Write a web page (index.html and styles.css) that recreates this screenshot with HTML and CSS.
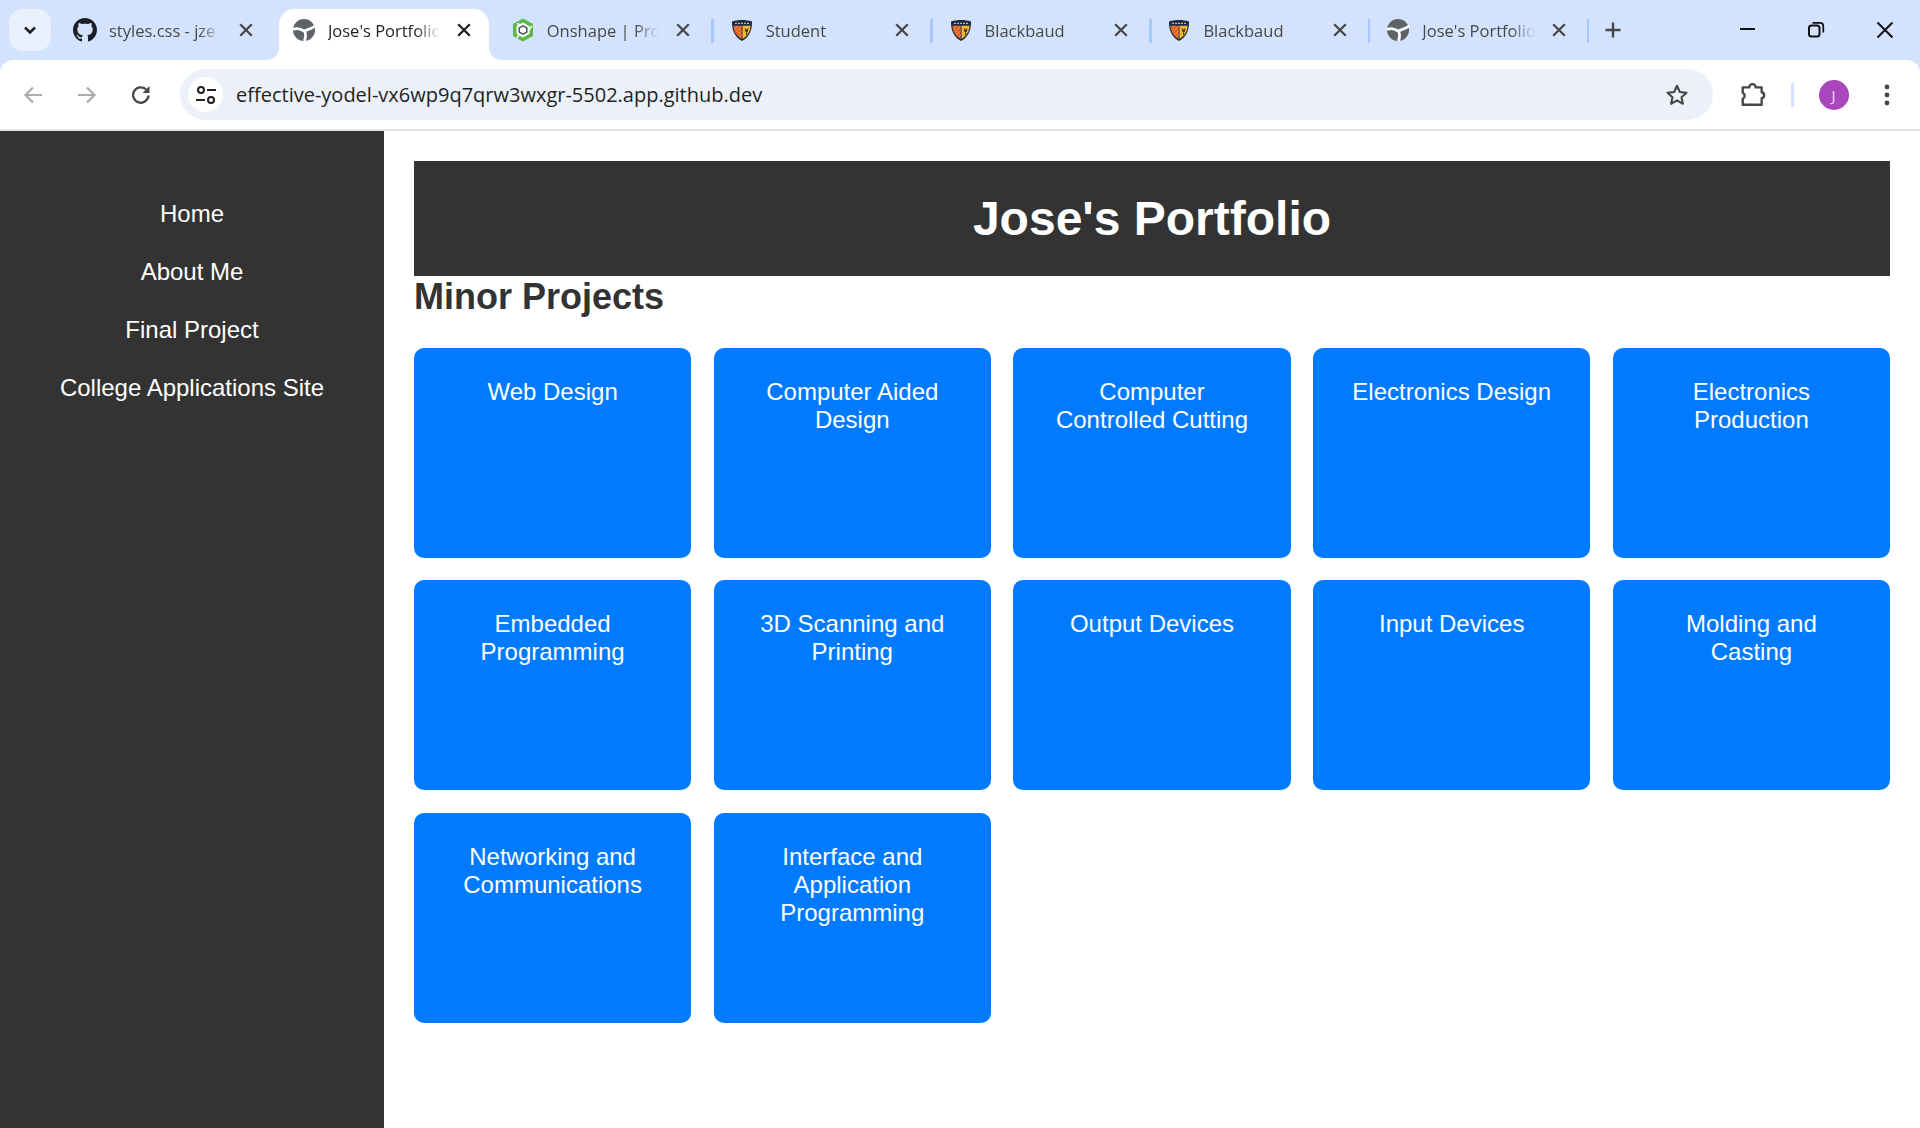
FILE: index.html
```html
<!DOCTYPE html>
<html lang="en">
<head>
    <meta charset="UTF-8">
    <meta name="viewport" content="width=device-width, initial-scale=1.0">
    <title>Jose's Portfolio</title>
    <link rel="stylesheet" href="styles.css">
</head>
<body>

<svg class="defs" width="0" height="0">
    <defs>
        <pattern id="stripes" width="3" height="3" patternUnits="userSpaceOnUse" patternTransform="rotate(45)">
            <rect width="3" height="3" fill="#f08a2c"/>
            <rect width="1.3" height="3" fill="#d9482b"/>
        </pattern>
        <symbol id="close" viewBox="0 0 24 24">
            <path d="M6.200 6.200l11.600 11.600M17.800 6.200L6.200 17.800" fill="none" stroke="currentColor" stroke-width="2.300"/>
        </symbol>
        <symbol id="globe" viewBox="0 0 24 24">
            <circle cx="12" cy="12" r="11" fill="#5f6368"/>
            <path d="M1 11.500C5 9.500 9 11 12 13c2 1.500 2 5 .5 10M23 8c-3 2.500-7 3.500-11 5" fill="none" stroke="#fff" stroke-width="2.800"/>
        </symbol>
        <symbol id="shield" viewBox="0 0 24 24">
            <path d="M2 3.500C8 1.500 16 1.500 22 3.500 22.300 12 19 19.500 12 23 5 19.500 1.700 12 2 3.500z" fill="#1d2b45"/>
            <path d="M3.500 7.800h8.200v13.200C6.500 18 3.700 13.500 3.500 7.800z" fill="url(#stripes)"/>
            <path d="M12.500 7.800h8c-.2 5.700-3 10.200-8 13.200z" fill="#f1b62c"/>
            <path d="M14.800 10l1.700 1.500L18.300 10l-.4 3.500-1 1 .5 2.500h-1.600l.5-2.500-1-1z" fill="#4a3a1e"/>
            <path d="M5 5.300h14" stroke="#cdb888" stroke-width="1.200" stroke-dasharray="2 1"/>
        </symbol>
    </defs>
</svg>

<div class="chrome">
    <div class="tabstrip">
        <button class="tab-search">
            <svg width="24" height="24" viewBox="0 0 24 24"><path d="M7 9.500l5 5 5-5" fill="none" stroke="#1f1f1f" stroke-width="2.500"/></svg>
        </button>

        <div class="tab">
            <svg class="favicon" viewBox="0 0 16 16"><path fill="#1b1f23" d="M8 0C3.580 0 0 3.580 0 8c0 3.540 2.290 6.530 5.470 7.590.4.070.55-.17.55-.38 0-.19-.01-.82-.01-1.490-2.010.37-2.530-.49-2.690-.94-.09-.23-.48-.94-.82-1.130-.28-.15-.68-.52-.01-.53.63-.01 1.080.58 1.230.82.72 1.210 1.870.87 2.330.66.070-.52.28-.87.51-1.070-1.780-.2-3.640-.89-3.640-3.950 0-.87.31-1.590.82-2.150-.08-.2-.36-1.020.08-2.120 0 0 .67-.21 2.200.82.64-.18 1.320-.27 2-.27.68 0 1.360.09 2 .27 1.530-1.040 2.200-.82 2.200-.82.44 1.100.16 1.920.08 2.120.51.56.82 1.270.82 2.150 0 3.070-1.870 3.750-3.650 3.950.29.25.54.73.54 1.480 0 1.070-.01 1.930-.01 2.200 0 .21.15.46.55.38A8.013 8.013 0 0016 8c0-4.420-3.580-8-8-8z"/></svg>
            <span class="tab-title">styles.css - jze</span>
            <svg class="tab-close"><use href="#close"/></svg>
        </div>

        <div class="tab active">
            <svg class="favicon"><use href="#globe"/></svg>
            <span class="tab-title">Jose's Portfolio</span>
            <svg class="tab-close"><use href="#close"/></svg>
        </div>

        <div class="tab sep">
            <svg class="favicon" viewBox="0 0 24 24">
                <path d="M12 0.500L22 6v12l-10 5.500L2 18V6z" fill="#5cb947"/>
                <path d="M12 4.500l6.500 3.700v7.600L12 19.500l-6.500-3.700V8.200z" fill="#fff"/>
                <path d="M6 5.500l6.500 3M21 8l-4 5M6 20l3-5" stroke="#fff" stroke-width="1.500" fill="none"/>
                <path d="M12 7.800l3.800 2.100v4.200L12 16.200l-3.800-2.100V9.900z" fill="none" stroke="#4d5458" stroke-width="1.500"/>
            </svg>
            <span class="tab-title">Onshape | Pro</span>
            <svg class="tab-close"><use href="#close"/></svg>
        </div>

        <div class="tab sep">
            <svg class="favicon"><use href="#shield"/></svg>
            <span class="tab-title">Student</span>
            <svg class="tab-close"><use href="#close"/></svg>
        </div>

        <div class="tab sep">
            <svg class="favicon"><use href="#shield"/></svg>
            <span class="tab-title">Blackbaud</span>
            <svg class="tab-close"><use href="#close"/></svg>
        </div>

        <div class="tab sep">
            <svg class="favicon"><use href="#shield"/></svg>
            <span class="tab-title">Blackbaud</span>
            <svg class="tab-close"><use href="#close"/></svg>
        </div>

        <div class="tab sep">
            <svg class="favicon"><use href="#globe"/></svg>
            <span class="tab-title">Jose's Portfolio</span>
            <svg class="tab-close"><use href="#close"/></svg>
        </div>

        <svg class="new-tab" width="24" height="24" viewBox="0 0 24 24"><path d="M12 4.500v15M4.500 12h15" stroke="#474747" stroke-width="2.400"/></svg>

        <div class="window-controls">
            <svg width="24" height="24" viewBox="0 0 24 24"><path d="M5 11h15" stroke="#111" stroke-width="2"/></svg>
            <svg width="24" height="24" viewBox="0 0 24 24"><rect x="5" y="7.500" width="10.500" height="11" rx="2.500" fill="none" stroke="#111" stroke-width="2"/><path d="M8.500 4.800h7.500q3.300 0 3.300 3.300v6.500" fill="none" stroke="#111" stroke-width="1.700"/></svg>
            <svg width="24" height="24" viewBox="0 0 24 24"><path d="M4.500 4.500l15 15M19.500 4.500l-15 15" stroke="#111" stroke-width="2"/></svg>
        </div>
    </div>

    <div class="toolbar">
        <svg class="nav-icon dim" viewBox="0 0 24 24"><path d="M21 12H5M12 4.500L4.500 12l7.500 7.500" fill="none" stroke="#a9abae" stroke-width="2.200"/></svg>
        <svg class="nav-icon dim" viewBox="0 0 24 24"><path d="M3 12h16M12 4.500l7.500 7.500-7.500 7.500" fill="none" stroke="#a9abae" stroke-width="2.200"/></svg>
        <svg class="nav-icon" viewBox="0 0 24 24"><path d="M19.500 12.500A7.700 7.700 0 1 1 17 6.300" fill="none" stroke="#474747" stroke-width="2.300"/><path d="M20.500 3v7h-7z" fill="#474747"/></svg>

        <div class="omnibox">
            <span class="site-info">
                <svg width="24" height="24" viewBox="0 0 24 24">
                    <circle cx="7" cy="7" r="3" fill="none" stroke="#1f1f1f" stroke-width="2"/>
                    <path d="M13 7h9M2 17h9" stroke="#1f1f1f" stroke-width="2"/>
                    <circle cx="17" cy="17" r="3" fill="none" stroke="#1f1f1f" stroke-width="2"/>
                </svg>
            </span>
            <span class="url">effective-yodel-vx6wp9q7qrw3wxgr-5502.app.github.dev</span>
            <svg class="star" width="24" height="24" viewBox="0 0 24 24"><path d="M12 2.800l2.800 6.200 6.700.7-5 4.500 1.400 6.600-5.900-3.400-5.900 3.400 1.400-6.600-5-4.500 6.700-.7z" fill="none" stroke="#474747" stroke-width="2.100" stroke-linejoin="round"/></svg>
        </div>

        <svg class="ext" width="26" height="26" viewBox="0 0 24 24"><path d="M2.500 5h6a3 3 0 0 1 6 0h5.500v4.500a2.800 2.800 0 0 1 0 5.500v6H2.500v-5.500a3 3 0 0 0 0-5.500z" fill="none" stroke="#474747" stroke-width="2.200" stroke-linejoin="round"/></svg>
        <span class="toolbar-divider"></span>
        <span class="avatar">J</span>
        <svg class="menu-dots" width="24" height="24" viewBox="0 0 24 24"><circle cx="12" cy="4" r="2.400" fill="#474747"/><circle cx="12" cy="12" r="2.400" fill="#474747"/><circle cx="12" cy="20" r="2.400" fill="#474747"/></svg>
    </div>
</div>

<div class="page">
    <nav class="sidebar">
        <a href="#">Home</a>
        <a href="#">About Me</a>
        <a href="#">Final Project</a>
        <a href="#">College Applications Site</a>
    </nav>

    <main class="content">
        <header class="banner">
            <h1>Jose's Portfolio</h1>
        </header>

        <h2>Minor Projects</h2>

        <div class="grid">
            <a class="card" href="#">Web Design</a>
            <a class="card" href="#">Computer Aided Design</a>
            <a class="card" href="#">Computer Controlled Cutting</a>
            <a class="card" href="#">Electronics Design</a>
            <a class="card" href="#">Electronics Production</a>
            <a class="card" href="#">Embedded Programming</a>
            <a class="card" href="#">3D Scanning and Printing</a>
            <a class="card" href="#">Output Devices</a>
            <a class="card" href="#">Input Devices</a>
            <a class="card" href="#">Molding and Casting</a>
            <a class="card" href="#">Networking and Communications</a>
            <a class="card" href="#">Interface and Application Programming</a>
        </div>
    </main>
</div>

</body>
</html>
```

FILE: styles.css
```css
html, body {
    margin: 0;
    height: 100%;
}
body {
    display: flex;
    flex-direction: column;
    overflow: hidden;
    background-color: #ffffff;
    font-family: "Liberation Sans", Arial, sans-serif;
}
.defs {
    display: block;
    height: 0;
}

/* browser window */
.chrome {
    flex: none;
    background-color: #d3e3fd;
}
.tabstrip {
    display: flex;
    align-items: flex-end;
    height: 60px;
    padding-left: 9px;
}
.tab-search {
    display: flex;
    align-items: center;
    justify-content: center;
    width: 42px;
    height: 42px;
    margin: 0 9px 9px 0;
    padding: 0;
    border: none;
    border-radius: 14px;
    background-color: #e9f1fe;
}
.tab {
    position: relative;
    display: flex;
    align-items: center;
    flex: none;
    gap: 12px;
    box-sizing: border-box;
    width: 210px;
    height: 51px;
    margin-right: 8.9px;
    padding: 0 12.5px 9px 13px;
    color: #474747;
    font-family: "Open Sans", sans-serif;
    font-size: 16.5px;
}
.tab.active {
    border-radius: 15px 15px 0 0;
    background-color: #ffffff;
    color: #1f1f1f;
}
.tab.active::before,
.tab.active::after {
    content: "";
    position: absolute;
    bottom: 0;
    width: 12px;
    height: 12px;
}
.tab.active::before {
    left: -12px;
    background: radial-gradient(circle at 0 0, #d3e3fd 11.5px, #ffffff 12px);
}
.tab.active::after {
    right: -12px;
    background: radial-gradient(circle at 100% 0, #d3e3fd 11.5px, #ffffff 12px);
}
.tab.sep::after {
    content: "";
    position: absolute;
    top: 10px;
    right: -6px;
    width: 2.5px;
    height: 24px;
    background-color: #a8c7fa;
}
.favicon {
    flex: none;
    width: 24px;
    height: 24px;
}
.tab-title {
    flex: 1;
    overflow: hidden;
    padding-top: 1px;
    white-space: nowrap;
    -webkit-mask-image: linear-gradient(to left, transparent, #000 24px);
    mask-image: linear-gradient(to left, transparent, #000 24px);
}
.tab-close {
    flex: none;
    width: 24px;
    height: 24px;
}
.new-tab {
    flex: none;
    margin: 0 0 18px 9px;
}
.window-controls {
    display: flex;
    gap: 45px;
    margin-left: auto;
    margin-right: 23px;
    padding-bottom: 18px;
}

.toolbar {
    display: flex;
    align-items: center;
    height: 69px;
    border-radius: 13px 13px 0 0;
    background-color: #ffffff;
}
.nav-icon {
    flex: none;
    width: 24px;
    height: 24px;
    margin-left: 30px;
}
.nav-icon:first-child {
    margin-left: 21px;
}
.omnibox {
    display: flex;
    align-items: center;
    flex: none;
    box-sizing: border-box;
    width: 1533px;
    height: 51px;
    margin-left: 27px;
    padding: 0 24px 0 8px;
    border-radius: 26px;
    background-color: #ecf1f9;
}
.site-info {
    display: flex;
    align-items: center;
    justify-content: center;
    width: 35px;
    height: 35px;
    border-radius: 50%;
    background-color: #ffffff;
}
.url {
    flex: 1;
    margin-left: 13px;
    color: #1f1f1f;
    font-family: "Open Sans", sans-serif;
    font-size: 20px;
}
.star {
    flex: none;
}
.ext {
    flex: none;
    margin-left: 27px;
}
.toolbar-divider {
    flex: none;
    width: 2.5px;
    height: 24px;
    margin-left: 25px;
    background-color: #d3e3fd;
}
.avatar {
    display: flex;
    align-items: center;
    justify-content: center;
    flex: none;
    width: 30px;
    height: 30px;
    margin-left: 25px;
    border-radius: 50%;
    background-color: #ab47bc;
    color: #f3dcf6;
    font-family: "Open Sans", sans-serif;
    font-size: 15px;
}
.menu-dots {
    flex: none;
    margin-left: 26px;
}

/* the portfolio page */
.page {
    display: flex;
    flex: 1;
    min-height: 0;
    border-top: 2px solid #e1e3e6;
}
.sidebar {
    display: flex;
    flex-direction: column;
    flex: none;
    gap: 30px;
    box-sizing: border-box;
    width: 384px;
    padding-top: 69px;
    background-color: #333333;
}
.sidebar a {
    color: #ffffff;
    font-size: 24px;
    text-align: center;
    text-decoration: none;
}
.content {
    flex: 1;
    min-width: 0;
    padding: 30px;
}
.banner {
    padding: 30px;
    background-color: #333333;
    color: #ffffff;
    text-align: center;
}
h1 {
    margin: 0;
    font-size: 48px;
}
h2 {
    margin: 0;
    color: #333333;
    font-size: 36px;
}
.grid {
    display: grid;
    grid-template-columns: repeat(5, 1fr);
    grid-auto-rows: 210px;
    gap: 22.5px;
    margin-top: 29.5px;
}
.card {
    box-sizing: border-box;
    padding: 30px 30px;
    border-radius: 10px;
    background-color: #007bff;
    color: #ffffff;
    font-size: 24px;
    line-height: 28px;
    text-align: center;
    text-decoration: none;
}
```
